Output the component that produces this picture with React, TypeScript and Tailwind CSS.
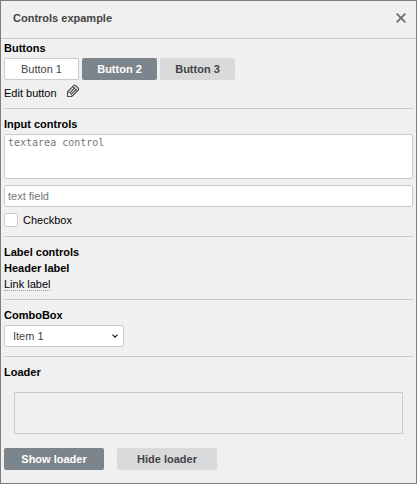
import React from "react";

function Title({ children }: { children: React.ReactNode }) {
  return <div className="h-4 leading-4 font-bold text-black">{children}</div>;
}

function Rule({ className }: { className: string }) {
  return <div className={"h-px shrink-0 bg-[#cbcbcb] " + className} />;
}

function PencilIcon() {
  return (
    <svg width="14" height="14" viewBox="0 0 14 14" fill="none" stroke="#4a4a4a" strokeWidth="1.1">
      <path d="M1.5 12.5V7.8L8 1.5Q8.8.9 9.6 1.5L12.4 4.3Q13 5.1 12.4 5.9L6.2 12L5.6 12.5Z" />
      <path d="M3.8 8.8L9.2 3.5M5.2 10.2L10.8 4.9" />
      <path d="M1.5 8L3.8 8.8L5.2 10.2L6.2 12M7 2.8L11 6.8" strokeWidth="0.8" />
    </svg>
  );
}

export default function App() {
  return (
    <div className="flex h-[484px] w-[417px] flex-col border border-[#7f7f7f] bg-[#f0f0f0] font-['Liberation_Sans',Arial,sans-serif] text-[11px] text-black">
      <header className="flex h-[38px] shrink-0 items-center justify-between border-b border-[#cbcbcb] pr-[10px] pb-[2px] pl-3">
        <span className="font-bold text-[#444444]">Controls expample</span>
        <svg className="mb-px" width="10" height="10" viewBox="0 0 10 10" stroke="#6f6f6f" strokeWidth="1.9">
          <path d="M.7.7L9.3 9.3M9.3.7L.7 9.3" />
        </svg>
      </header>
      <main className="flex flex-col px-[3px]">
        <div className="pt-px">
          <Title>Buttons</Title>
        </div>
        <div className="mt-[2px] flex gap-[3px]">
          <button className="h-[22px] w-[75px] rounded-[2px] border border-[#cbcbcb] bg-white text-[#444444]">Button 1</button>
          <button className="h-[22px] w-[75px] rounded-[2px] bg-[#7d858c] font-bold text-white">Button 2</button>
          <button className="h-[22px] w-[75px] rounded-[2px] bg-[#d9dadc] font-bold text-[#444444]">Button 3</button>
        </div>
        <div className="mt-[4px] flex h-[18px] items-start">
          <span className="w-[62px] pt-px leading-4">Edit button</span>
          <PencilIcon />
        </div>
        <Rule className="mt-[6px]" />
        <div className="mt-[7px]">
          <Title>Input controls</Title>
        </div>
        <textarea
          className="mt-[2px] block h-[45px] w-full resize-none rounded-[2px] border border-[#cbcbcb] bg-white px-[3px] py-[2px] font-['DejaVu_Sans_Mono',monospace] text-[10px] leading-[12px] placeholder:text-[#757575]"
          placeholder="textarea control"
        />
        <input
          className="mt-[6px] block h-[22px] w-full rounded-[2px] border border-[#cbcbcb] bg-white px-[3px] placeholder:text-[#757575]"
          placeholder="text field"
        />
        <label className="mt-[5px] flex h-4 items-center">
          <input type="checkbox" className="h-[14px] w-[14px] appearance-none rounded-[2px] border border-[#cbcbcb] bg-white" />
          <span className="ml-[5px]">Checkbox</span>
        </label>
        <Rule className="mt-[8px]" />
        <div className="mt-[7px]">
          <Title>Label controls</Title>
          <Title>Header label</Title>
          <div className="flex h-4">
            <span className="h-[15px] border-b border-dotted border-[#999999] leading-4">Link label</span>
          </div>
        </div>
        <Rule className="mt-[7px]" />
        <div className="mt-[7px]">
          <Title>ComboBox</Title>
        </div>
        <div className="mt-[2px] flex h-[22px] w-[120px] items-center justify-between rounded-[2px] border border-[#cbcbcb] bg-white pr-[5px] pl-2 text-[#444444]">
          <span>Item 1</span>
          <svg width="6" height="4" viewBox="0 0 6 4" fill="none" stroke="#111111" strokeWidth="1.1">
            <path d="M.5.6L3 3.1L5.5.6" />
          </svg>
        </div>
        <Rule className="mt-[9px]" />
        <div className="mt-[7px]">
          <Title>Loader</Title>
        </div>
        <div className="mx-[10px] mt-[12px] h-[42px] border border-[#cbcbcb]" />
        <div className="mt-[14px] flex gap-[13px]">
          <button className="h-[22px] w-[100px] rounded-[2px] bg-[#7d858c] font-bold text-white">Show loader</button>
          <button className="h-[22px] w-[100px] rounded-[2px] bg-[#d9dadc] font-bold text-[#444444]">Hide loader</button>
        </div>
      </main>
    </div>
  );
}
